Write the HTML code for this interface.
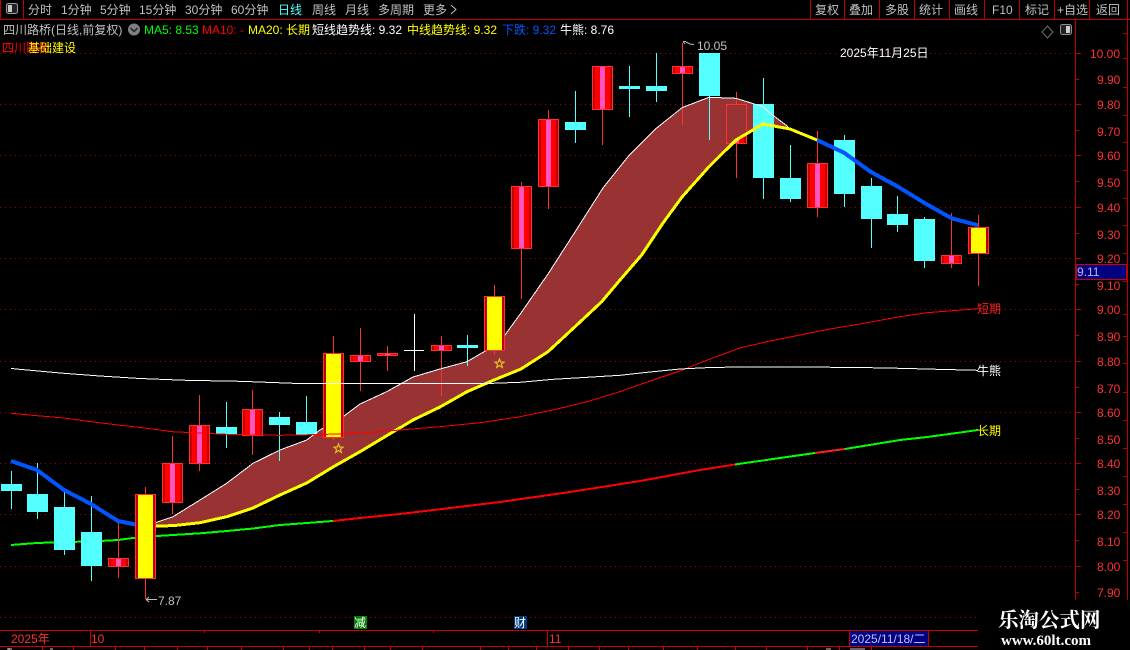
<!DOCTYPE html>
<html lang="zh">
<head>
<meta charset="utf-8">
<title>四川路桥</title>
<style>
html,body{margin:0;padding:0;background:#000;width:1130px;height:650px;overflow:hidden}
svg{display:block;position:absolute;left:0;top:0}
text{font-family:"Liberation Sans","WenQuanYi Zen Hei","Noto Sans CJK SC",sans-serif;font-size:12px;white-space:pre}
.t{fill:#c0c0c0;font-size:12px}
.a{fill:#ff3232;font-size:12px}
.wm{font-family:"Liberation Serif","Noto Serif CJK SC",serif;font-weight:bold;fill:#fff}
.c rect{shape-rendering:crispEdges}
polyline{shape-rendering:crispEdges}
</style>
</head>
<body>
<svg width="1130" height="650" viewBox="0 0 1130 650" xmlns="http://www.w3.org/2000/svg">
<defs>
<linearGradient id="r" x1="0" x2="1" y1="0" y2="0">
<stop offset="0" stop-color="#c00000"/><stop offset=".125" stop-color="#c00000"/>
<stop offset=".125" stop-color="#ff0000"/><stop offset=".375" stop-color="#ff0000"/>
<stop offset=".375" stop-color="#ff55c0"/><stop offset=".625" stop-color="#ff55c0"/>
<stop offset=".625" stop-color="#ff0000"/><stop offset=".875" stop-color="#ff0000"/>
<stop offset=".875" stop-color="#c00000"/><stop offset="1" stop-color="#c00000"/>
</linearGradient>
<linearGradient id="y" x1="0" x2="1" y1="0" y2="0">
<stop offset="0" stop-color="#c00000"/><stop offset=".125" stop-color="#c00000"/>
<stop offset=".125" stop-color="#ffff00"/><stop offset=".875" stop-color="#ffff00"/>
<stop offset=".875" stop-color="#c00000"/><stop offset="1" stop-color="#c00000"/>
</linearGradient>
</defs>
<rect width="1130" height="650" fill="#000"/>

<!-- grid -->
<g stroke="#a00000" stroke-width="1" stroke-dasharray="1 4" shape-rendering="crispEdges">
<path d="M0 53.5H1075M0 104.5H1075M0 155.5H1075M0 207.5H1075M0 258.5H1075M0 309.5H1075M0 361.5H1075M0 412.5H1075M0 463.5H1075M0 514.5H1075M0 566.5H1075M0 617.5H978"/>
</g>

<!-- green / red long line -->
<g fill="none" stroke-width="2">
<polyline stroke="#00ff00" points="11,545 37,543 64,542 91,541.5 118,540 133,538 157,536 200,533.3 227,531 253,528.5 280,525 307,523 333,521"/>
<polyline stroke="#ff0000" points="333,521 360,518 400,514 450,508 500,502 570,492 640,481 700,470 735,464.5"/>
<polyline stroke="#00ff00" points="735,464.5 780,458 815,453"/>
<polyline stroke="#ff2020" points="815,453 845,449"/>
<polyline stroke="#00ff00" points="845,449 900,440 927,437 953,433.5 978,430"/>
</g>

<!-- candle under band -->
<g class="c"><rect x="736" y="92" width="1" height="86" fill="#ff3232"/>
<rect x="726.5" y="104.5" width="20" height="39" fill="url(#r)" stroke="#ff3232"/></g>

<!-- band -->
<polygon fill="#993333" points="153,523.5 173,516.7 200,500 226.7,483.3 253,463.3 280,450 306.7,440 320,430 341.7,417.7 360,404 386.7,391.7 413,377 440,369 467,361.7 487,350 503,337.7 521,313 548,274 575,232 603,188 628,156.7 656.7,128 682,107.7 709,97.3 736,98.3 763,106.7 770,113 788,126.7 790,129 763,124 736,140 709,166.7 682,197 663,223 641.7,255 620,280 601.7,301.7 575,326.7 548,351.7 521,369 494,380 467,391.7 440,407 413,420 386.7,435.7 360,451.7 333,467 306.7,483 280,495 253,508 226.7,516.7 200,522.7 173,525.7 153,525.7"/>
<rect x="726.5" y="104.5" width="20" height="39" fill="none" stroke="#ff3232" shape-rendering="crispEdges"/>
<rect x="736" y="92" width="1" height="12" fill="#ff3232" shape-rendering="crispEdges"/>

<!-- candles -->
<g class="c">
<!-- cyan -->
<g fill="#54ffff">
<rect x="11" y="471" width="1" height="38"/><rect x="1" y="484" width="21" height="7"/>
<rect x="37" y="463" width="1" height="56"/><rect x="27" y="494" width="21" height="18"/>
<rect x="64" y="491" width="1" height="64"/><rect x="54" y="507" width="21" height="43"/>
<rect x="91" y="496" width="1" height="85"/><rect x="81" y="532" width="21" height="34"/>
<rect x="226" y="402" width="1" height="46"/><rect x="216" y="427" width="21" height="7"/>
<rect x="279" y="412" width="1" height="49"/><rect x="269" y="417" width="21" height="8"/>
<rect x="306" y="396" width="1" height="39"/><rect x="296" y="422" width="21" height="13"/>
<rect x="467" y="335" width="1" height="31"/><rect x="457" y="345" width="21" height="3"/>
<rect x="575" y="91" width="1" height="52"/><rect x="565" y="122" width="21" height="8"/>
<rect x="629" y="66" width="1" height="51"/><rect x="619" y="86" width="21" height="3"/>
<rect x="656" y="53" width="1" height="49"/><rect x="646" y="86" width="21" height="5"/>
<rect x="709" y="53" width="1" height="87"/><rect x="699" y="53" width="21" height="43"/>
<rect x="763" y="78" width="1" height="121"/><rect x="753" y="104" width="21" height="74"/>
<rect x="790" y="145" width="1" height="57"/><rect x="780" y="178" width="21" height="21"/>
<rect x="844" y="135" width="1" height="72"/><rect x="834" y="140" width="21" height="54"/>
<rect x="871" y="178" width="1" height="70"/><rect x="861" y="186" width="21" height="33"/>
<rect x="897" y="196" width="1" height="36"/><rect x="887" y="214" width="21" height="11"/>
<rect x="924" y="217" width="1" height="51"/><rect x="914" y="219" width="21" height="42"/>
</g>
<!-- white doji -->
<rect x="414" y="314" width="1" height="57" fill="#fff"/><rect x="404" y="350" width="20" height="1" fill="#fff"/>
<!-- red wicks -->
<g fill="#ff3232">
<rect x="118" y="520" width="1" height="58"/>
<rect x="172" y="436" width="1" height="78"/>
<rect x="199" y="395" width="1" height="76"/>
<rect x="252" y="390" width="1" height="65"/>
<rect x="360" y="328" width="1" height="63"/>
<rect x="387" y="346" width="1" height="25"/>
<rect x="441" y="336" width="1" height="60"/>
<rect x="521" y="182" width="1" height="117"/>
<rect x="548" y="110" width="1" height="99"/>
<rect x="602" y="66" width="1" height="79"/>
<rect x="682" y="43" width="1" height="82"/>
<rect x="817" y="131" width="1" height="86"/>
<rect x="951" y="213" width="1" height="55"/>
</g>
<!-- red bodies -->
<g fill="url(#r)" stroke="#ff3232">
<rect x="108.5" y="558.5" width="20" height="8"/>
<rect x="162.5" y="463.5" width="20" height="39"/>
<rect x="189.5" y="425.5" width="20" height="38"/>
<rect x="242.5" y="409.5" width="20" height="26"/>
<rect x="350.5" y="355.5" width="20" height="6"/>
<rect x="377.5" y="353.5" width="20" height="2"/>
<rect x="431.5" y="345.5" width="20" height="5"/>
<rect x="511.5" y="186.5" width="20" height="62"/>
<rect x="538.5" y="119.5" width="20" height="67"/>
<rect x="592.5" y="66.5" width="20" height="43"/>
<rect x="672.5" y="66.5" width="20" height="7"/>
<rect x="807.5" y="163.5" width="20" height="44"/>
<rect x="941.5" y="255.5" width="20" height="8"/>
</g>
</g>

<!-- band edges and trend lines -->
<polyline fill="none" stroke="#fff" stroke-width="1" points="153,523.5 173,516.7 200,500 226.7,483.3 253,463.3 280,450 306.7,440 320,430 341.7,417.7 360,404 386.7,391.7 413,377 440,369 467,361.7 487,350 503,337.7 521,313 548,274 575,232 603,188 628,156.7 656.7,128 682,107.7 709,97.3 736,98.3 763,106.7 770,113 788,126.7"/>
<polyline fill="none" stroke="#0055ff" stroke-width="4" points="11,461 37,470 64,490 91,504 118,521 138,525"/>
<polyline fill="none" stroke="#ffff00" stroke-width="3" points="146,526 173,525.7 200,522.7 226.7,516.7 253,508 280,495 306.7,483 333,467 360,451.7 386.7,435.7 413,420 440,407 467,391.7 494,380 521,369 548,351.7 575,326.7 601.7,301.7 620,280 641.7,255 663,223 682,197 709,166.7 736,140 763,124 790,129 817,140"/>
<polyline fill="none" stroke="#0055ff" stroke-width="4" points="817,140 844,152.7 871,172 898,186.7 925,203.3 951.7,218.3 978,225.3"/>

<!-- yellow candles -->
<g class="c">
<rect x="145" y="487" width="1" height="112" fill="#ff3232"/>
<rect x="135.5" y="494.5" width="20" height="84" fill="url(#y)" stroke="#ff3232"/>
<rect x="333" y="336" width="1" height="104" fill="#ff3232"/>
<rect x="323.5" y="353.5" width="20" height="84" fill="url(#y)" stroke="#ff3232"/>
<rect x="494" y="285" width="1" height="70" fill="#ff3232"/>
<rect x="484.5" y="296.5" width="20" height="54" fill="url(#y)" stroke="#ff3232"/>
<rect x="978" y="215" width="1" height="71" fill="#ff3232"/>
<rect x="968.5" y="227.5" width="20" height="26" fill="url(#y)" stroke="#ff3232"/>
</g>

<!-- thin MA lines -->
<polyline fill="none" stroke="#ff0000" stroke-width="1" points="11,413.3 37,415.7 64,418 91,421.7 118,425 145,428 172,431.7 199,433 226.7,434.3 253,435 280,435.3 320,434.5 360,433.3 400,430 440,426.7 480,422.7 520,416.7 553,410 587,401.7 620,391.7 650,381 680,371 710,359 740,348 770,341 800,335 830,329 860,324 900,316.7 927,312.7 953,310.7 978,308.7"/>
<polyline fill="none" stroke="#ffffff" stroke-width="1" points="11,368.5 60,373 100,376 140,378.5 186,380.3 240,381.3 267,382.3 293,383.3 487,383.5 520,382.3 553,379.3 587,377.3 620,375.3 650,372 680,369 710,367.5 740,367 800,367 860,367.5 900,368.3 937,369.3 978,370.3"/>

<!-- stars -->
<g fill="none" stroke="#e8c020" stroke-width="1.2">
<polygon points="338.5,444 339.7,447 343,447.2 340.4,449.2 341.3,452.4 338.5,450.6 335.7,452.4 336.6,449.2 334,447.2 337.3,447"/>
<polygon points="499.5,359 500.7,362 504,362.2 501.4,364.2 502.3,367.4 499.5,365.6 496.7,367.4 497.6,364.2 495,362.2 498.3,362"/>
</g>

<!-- high / low marks -->
<path d="M683 41.5H686M683 41.5L685 44M686 42L690 44L694 44.5" fill="none" stroke="#c0c0c0" stroke-width="1"/>
<text x="697" y="50" class="t">10.05</text>
<path d="M146 599.5H157M146 599.5L149 597M146 599.5L149 602" fill="none" stroke="#c0c0c0" stroke-width="1"/>
<text x="158" y="605" class="t">7.87</text>

<!-- line labels -->
<text x="977" y="313" fill="#ff2020">短期</text>
<text x="977" y="375" fill="#ffffff">牛熊</text>
<text x="977" y="435" fill="#ffff00">长期</text>

<!-- date -->
<text x="840" y="57" fill="#ffffff">2025年11月25日</text>

<!-- top toolbar lines -->
<g stroke="#c00000" stroke-width="1" shape-rendering="crispEdges" fill="none">
<path d="M0 19.5H1130"/>
<path d="M0.5 0V19M23.5 0V19"/>
<path d="M810.5 0V19M844.5 0V19M879.5 0V19M914.5 0V19M949.5 0V19M984.5 0V19M1019.5 0V19M1054.5 0V19M1089.5 0V19"/>
</g>

<!-- toolbar icon -->
<rect x="6.5" y="3.5" width="11" height="10" rx="2" fill="#222" stroke="#a0a0a0"/>
<rect x="8" y="5" width="4" height="7" fill="#c8c8c8"/>

<!-- toolbar text -->
<g class="t">
<text x="28" y="14" class="t">分时</text>
<text x="61" y="14" class="t">1分钟</text>
<text x="100" y="14" class="t">5分钟</text>
<text x="139" y="14" class="t">15分钟</text>
<text x="185" y="14" class="t">30分钟</text>
<text x="231" y="14" class="t">60分钟</text>
<text x="278" y="14" fill="#54ffff">日线</text>
<text x="312" y="14" class="t">周线</text>
<text x="345" y="14" class="t">月线</text>
<text x="378" y="14" class="t">多周期</text>
<text x="423" y="14" class="t">更多</text>
<path d="M451 5L456 9.5L451 14" fill="none" stroke="#c0c0c0"/>
<text x="815" y="14" class="t">复权</text>
<text x="849" y="14" class="t">叠加</text>
<text x="885" y="14" class="t">多股</text>
<text x="919" y="14" class="t">统计</text>
<text x="954" y="14" class="t">画线</text>
<text x="992" y="14" class="t">F10</text>
<text x="1025" y="14" class="t">标记</text>
<text x="1057" y="14" class="t">+自选</text>
<text x="1096" y="14" class="t">返回</text>
</g>

<!-- info row -->
<text x="3" y="34" class="t">四川路桥(日线,前复权)</text>
<circle cx="134" cy="29.5" r="6" fill="#808080"/>
<path d="M130.5 28L134 31.5L137.5 28" fill="none" stroke="#222" stroke-width="1.5"/>
<text x="144" y="34" fill="#00ff00">MA5: 8.53</text>
<text x="202" y="34" fill="#ff0000">MA10: -</text>
<text x="248" y="34" fill="#ffff00">MA20: 长期</text>
<text x="312" y="34" fill="#ffffff">短线趋势线: 9.32</text>
<text x="407" y="34" fill="#ffff00">中线趋势线: 9.32</text>
<text x="502" y="34" fill="#0055ff">下跌: 9.32</text>
<text x="560" y="34" fill="#ffffff">牛熊: 8.76</text>

<text x="2" y="52" fill="#ff0000">四川路桥</text>
<text x="28" y="52" fill="#ffff00">基础建设</text>

<!-- top-right icons -->
<polygon points="1047.5,26 1053,32 1047.5,38 1042,32" fill="none" stroke="#707070"/>
<rect x="1060.5" y="24.5" width="11" height="10" rx="2" fill="#222" stroke="#909090"/>
<rect x="1066" y="26" width="4" height="7" fill="#d0d0d0"/>

<!-- y axis -->
<g stroke="#c00000" shape-rendering="crispEdges" fill="none">
<path d="M1075.5 20V600"/>
<path d="M1127.5 0V600"/>
<path d="M1076 53.5H1081M1076 79.5H1079M1076 104.5H1081M1076 130.5H1079M1076 155.5H1081M1076 181.5H1079M1076 207.5H1081M1076 233.5H1079M1076 258.5H1081M1076 284.5H1079M1076 309.5H1081M1076 335.5H1079M1076 361.5H1081M1076 387.5H1079M1076 412.5H1081M1076 438.5H1079M1076 463.5H1081M1076 489.5H1079M1076 514.5H1081M1076 540.5H1079M1076 566.5H1081M1076 592.5H1079"/>
<path d="M1123 33.5H1127M1123 58.5H1127M1123 87.5H1127M1123 115.5H1127M1123 142.5H1127M1123 170.5H1127M1123 198.5H1127M1123 225.5H1127M1123 253.5H1127M1123 281.5H1127M1123 314.5H1127M1123 336.5H1127M1123 363.5H1127M1123 392.5H1127M1123 420.5H1127M1123 448.5H1127M1123 476.5H1127M1123 504.5H1127M1123 532.5H1127M1123 560.5H1127"/>
</g>
<g>
<text x="1090" y="58" class="a">10.00</text>
<text x="1097" y="84" class="a">9.90</text>
<text x="1097" y="109" class="a">9.80</text>
<text x="1097" y="136" class="a">9.70</text>
<text x="1097" y="160" class="a">9.60</text>
<text x="1097" y="187" class="a">9.50</text>
<text x="1097" y="212" class="a">9.40</text>
<text x="1097" y="239" class="a">9.30</text>
<text x="1097" y="263" class="a">9.20</text>
<text x="1097" y="290" class="a">9.10</text>
<text x="1097" y="314" class="a">9.00</text>
<text x="1097" y="341" class="a">8.90</text>
<text x="1097" y="366" class="a">8.80</text>
<text x="1097" y="393" class="a">8.70</text>
<text x="1097" y="417" class="a">8.60</text>
<text x="1097" y="444" class="a">8.50</text>
<text x="1097" y="468" class="a">8.40</text>
<text x="1097" y="495" class="a">8.30</text>
<text x="1097" y="519" class="a">8.20</text>
<text x="1097" y="546" class="a">8.10</text>
<text x="1097" y="571" class="a">8.00</text>
<text x="1097" y="597" class="a">7.90</text>
</g>
<rect x="1076.5" y="264.5" width="50" height="15" fill="#000080" stroke="#d00000" shape-rendering="crispEdges"/>
<text x="1077" y="276" fill="#b8b8ff">9.11</text>

<!-- markers -->
<rect x="354" y="616" width="13" height="13" fill="#008000"/>
<text x="354" y="627" fill="#ffffff">减</text>
<rect x="514" y="616" width="13" height="13" fill="#003a80"/>
<text x="514" y="627" fill="#ffffff">财</text>

<!-- bottom axis -->
<g stroke="#d00000" shape-rendering="crispEdges" fill="none">
<path d="M0 630.5H978M0 646.5H978"/>
<path d="M90.5 631V646M547.5 631V646"/>
<path d="M204.5 631V633M319.5 631V633M433.5 631V633"/>
<path d="M42.5 647V650M73.5 647V650M115.5 647V650M144.5 647V650M177.5 647V650M207.5 647V650M241.5 647V650M283.5 647V650M309.5 647V650M332.5 647V650M364.5 647V650M390.5 647V650M422.5 647V650M480.5 647V650M508.5 647V650M536.5 647V650M568.5 647V650M599.5 647V650M628.5 647V650M663.5 647V650M697.5 647V650M735.5 647V650M766.5 647V650M807.5 647V650M839.5 647V650M871.5 647V650"/>
</g>
<text x="11" y="643" fill="#ff3232">2025年</text>
<text x="91" y="643" fill="#ff3232">10</text>
<text x="549" y="643" fill="#ff3232">11</text>
<rect x="849.5" y="630.5" width="79" height="16" fill="#000080" stroke="#d00000" shape-rendering="crispEdges"/>
<text x="851" y="643" fill="#c0c0ff">2025/11/18/二</text>
<path d="M7 649H12M9 648V650M50 649H53M826 649H831M850 649H865" fill="none" stroke="#c8c8c8" shape-rendering="crispEdges"/>

<!-- watermark -->
<text x="998" y="627" class="wm" style="font-size:20.5px">乐淘公式网</text>
<text x="1001" y="645" class="wm" style="font-size:15px">www.60lt.com</text>
</svg>
</body>
</html>
